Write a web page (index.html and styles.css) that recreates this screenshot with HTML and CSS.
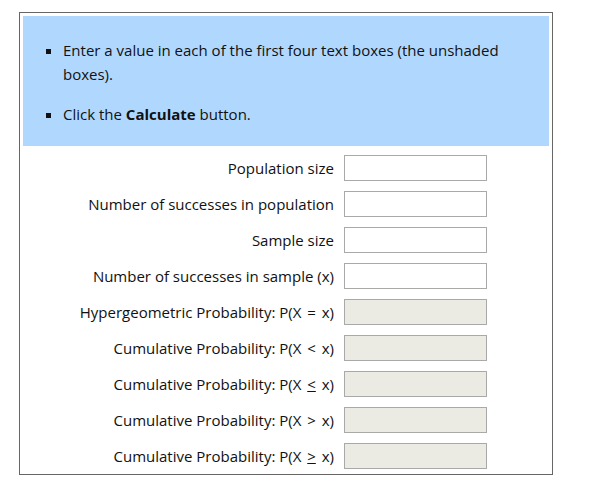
FILE: index.html
```html
<!DOCTYPE html>
<html>
<head>
<meta charset="utf-8">
<link rel="stylesheet" href="styles.css">
</head>
<body>
<div class="calc">
  <div class="info">
    <ul>
      <li>Enter a value in each of the first four text boxes (the unshaded boxes).</li>
      <li>Click the <b>Calculate</b> button.</li>
    </ul>
  </div>
  <div class="form">
    <label class="lbl">Population size</label><input class="box" type="text">
    <label class="lbl">Number of successes in population</label><input class="box" type="text">
    <label class="lbl">Sample size</label><input class="box" type="text">
    <label class="lbl">Number of successes in sample (x)</label><input class="box" type="text">
    <label class="lbl">Hypergeometric Probability: P(X <span class="op">=</span> x)</label><input class="box shaded" type="text" readonly>
    <label class="lbl">Cumulative Probability: P(X <span class="op">&lt;</span> x)</label><input class="box shaded" type="text" readonly>
    <label class="lbl">Cumulative Probability: P(X <u class="op">&lt;</u> x)</label><input class="box shaded" type="text" readonly>
    <label class="lbl">Cumulative Probability: P(X <span class="op">&gt;</span> x)</label><input class="box shaded" type="text" readonly>
    <label class="lbl">Cumulative Probability: P(X <u class="op">&gt;</u> x)</label><input class="box shaded" type="text" readonly>
  </div>
</div>
</body>
</html>
```
FILE: styles.css
```css
html, body {
  margin: 0;
  padding: 0;
  background: #fff;
}
body {
  font-family: "Open Sans", "Noto Sans", sans-serif;
  font-size: 15px;
  color: #111;
}
.calc {
  box-sizing: border-box;
  margin: 12px 0 0 19px;
  width: 534px;
  height: 463px;
  border: 1px solid #666;
  padding: 3px 3px 4px 3px;
}
.info {
  background: #b0d8ff;
  padding: 22px 0 20px 0;
}
.info ul {
  margin: 0;
  padding-left: 40px;
  list-style: square;
}
.info li {
  line-height: 24px;
  margin-right: 40px;
}
.info li + li {
  margin-top: 16px;
}
.form {
  display: grid;
  grid-template-columns: 314px 143px;
  grid-auto-rows: 26px;
  column-gap: 10px;
  row-gap: 10px;
  padding-top: 9px;
  margin-left: -3px;
}
.lbl {
  text-align: right;
  line-height: 26px;
  white-space: nowrap;
}
.op {
  display: inline-block;
  margin: 0 2px;
}
u.op {
  text-decoration: underline;
}
.box {
  box-sizing: border-box;
  width: 143px;
  height: 26px;
  margin: 0;
  border: 1px solid #a9a9a9;
  background: #fff;
  padding: 2px 4px;
  font: inherit;
}
.shaded {
  background: #ebebe4;
}
```
